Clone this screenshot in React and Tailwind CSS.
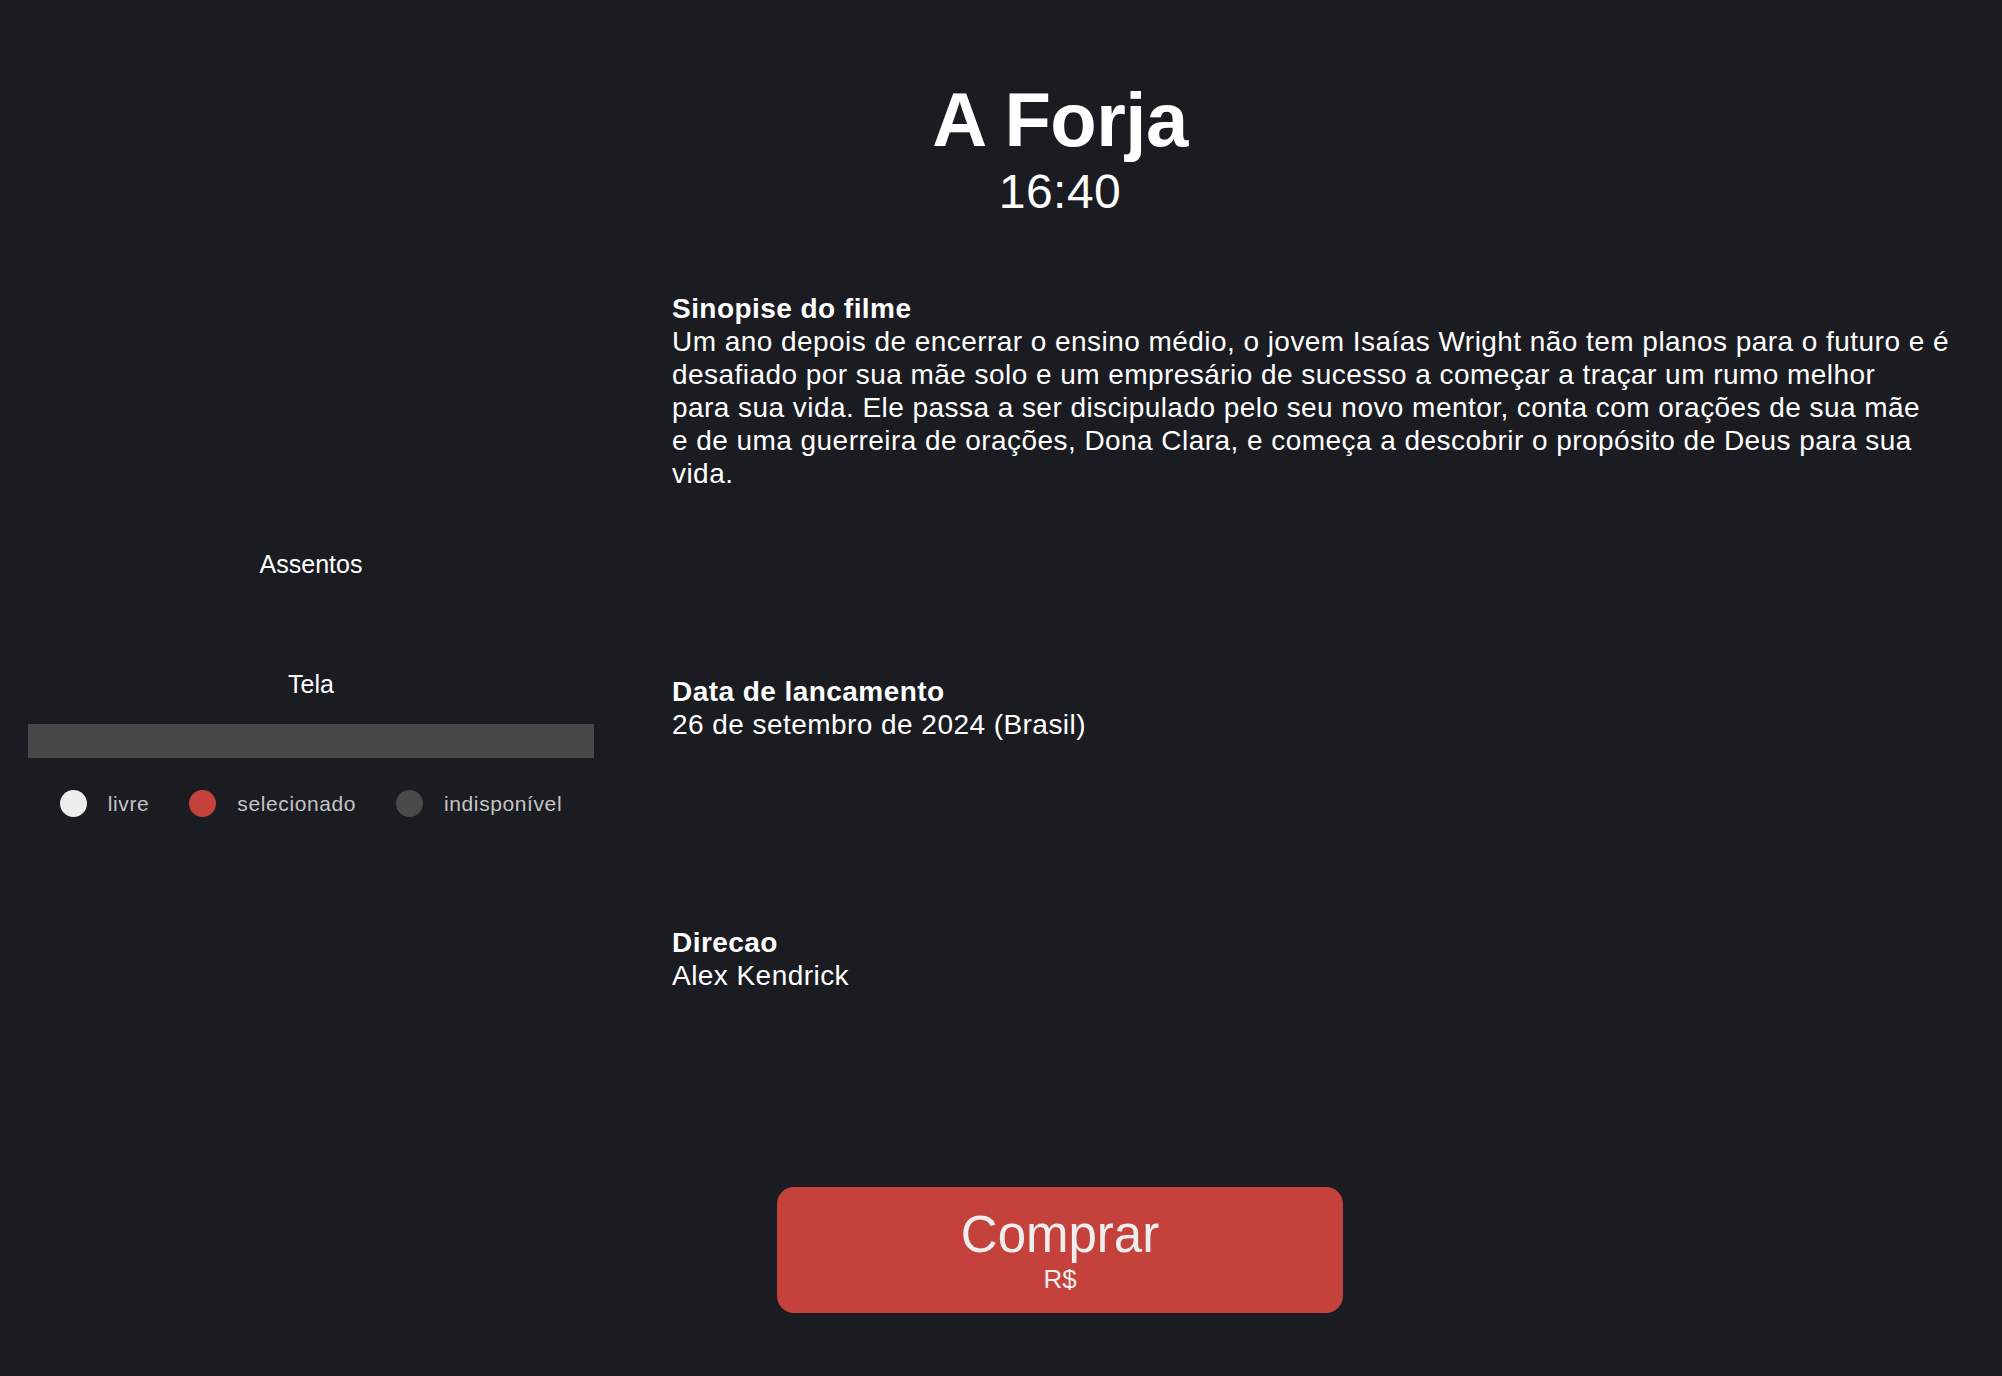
const font = { fontFamily: '"Liberation Sans", Arial, Helvetica, sans-serif' };

const legenda = [
  { label: 'livre', cor: 'bg-[#eeeeee]' },
  { label: 'selecionado', cor: 'bg-[#c5423c]' },
  { label: 'indisponível', cor: 'bg-[#4a4a4a]' },
];

const sinopse = [
  'Um ano depois de encerrar o ensino médio, o jovem Isaías Wright não tem planos para o futuro e é',
  'desafiado por sua mãe solo e um empresário de sucesso a começar a traçar um rumo melhor',
  'para sua vida. Ele passa a ser discipulado pelo seu novo mentor, conta com orações de sua mãe',
  'e de uma guerreira de orações, Dona Clara, e começa a descobrir o propósito de Deus para sua',
  'vida.',
];

function Assentos() {
  return (
    <section className="w-[566px] shrink-0 pt-[258px] flex flex-col items-center">
      <h2 className="text-[25px] leading-[29px] text-white">Assentos</h2>
      <div className="h-[91px]" />
      <h3 className="text-[25px] leading-[29px] text-white">Tela</h3>
      <div className="mt-[25px] w-full h-[34px] bg-[#484848]" />
      <ul className="mt-[32px] flex items-center gap-[40px]">
        {legenda.map((item) => (
          <li key={item.label} className="flex items-center gap-[21px]">
            <span className={`w-[27px] h-[27px] rounded-full ${item.cor}`} />
            <span className="text-[21px] leading-[27px] tracking-[0.6px] text-[#c4c4c4]">{item.label}</span>
          </li>
        ))}
      </ul>
    </section>
  );
}

function Info({ titulo, children }) {
  return (
    <div className="text-[28px] leading-[33px] tracking-[0.45px] text-white">
      <h4 className="font-bold">{titulo}</h4>
      <p>{children}</p>
    </div>
  );
}

export default function App() {
  return (
    <div className="min-h-screen overflow-hidden bg-[#1b1c21]" style={font}>
      <div className="w-[2120px] flex flex-col items-center pt-[76px] pb-[62px]">
        <header className="flex flex-col items-center text-white">
          <h1 className="text-[76px] font-bold leading-[88px] tracking-[-0.5px]">A Forja</h1>
          <span className="text-[48px] leading-[55px] tracking-[0.5px]">16:40</span>
        </header>

        <main className="self-start mt-[73px] pl-[28px] flex gap-[78px]">
          <Assentos />
          <div className="w-[1300px] flex flex-col gap-[185px]">
            <Info titulo="Sinopise do filme">
              {sinopse.map((linha, i) => (
                <span key={i} className="block">{linha}</span>
              ))}
            </Info>
            <Info titulo="Data de lancamento">26 de setembro de 2024 (Brasil)</Info>
            <Info titulo="Direcao">Alex Kendrick</Info>
          </div>
        </main>

        <button className="mt-[195px] w-[566px] h-[126px] rounded-[17px] bg-[#c5423c] text-[#eeeeee] flex flex-col items-center justify-center">
          <span className="text-[51px] leading-[58px]">Comprar</span>
          <span className="text-[26px] leading-[30px]">R$</span>
        </button>
      </div>
    </div>
  );
}
